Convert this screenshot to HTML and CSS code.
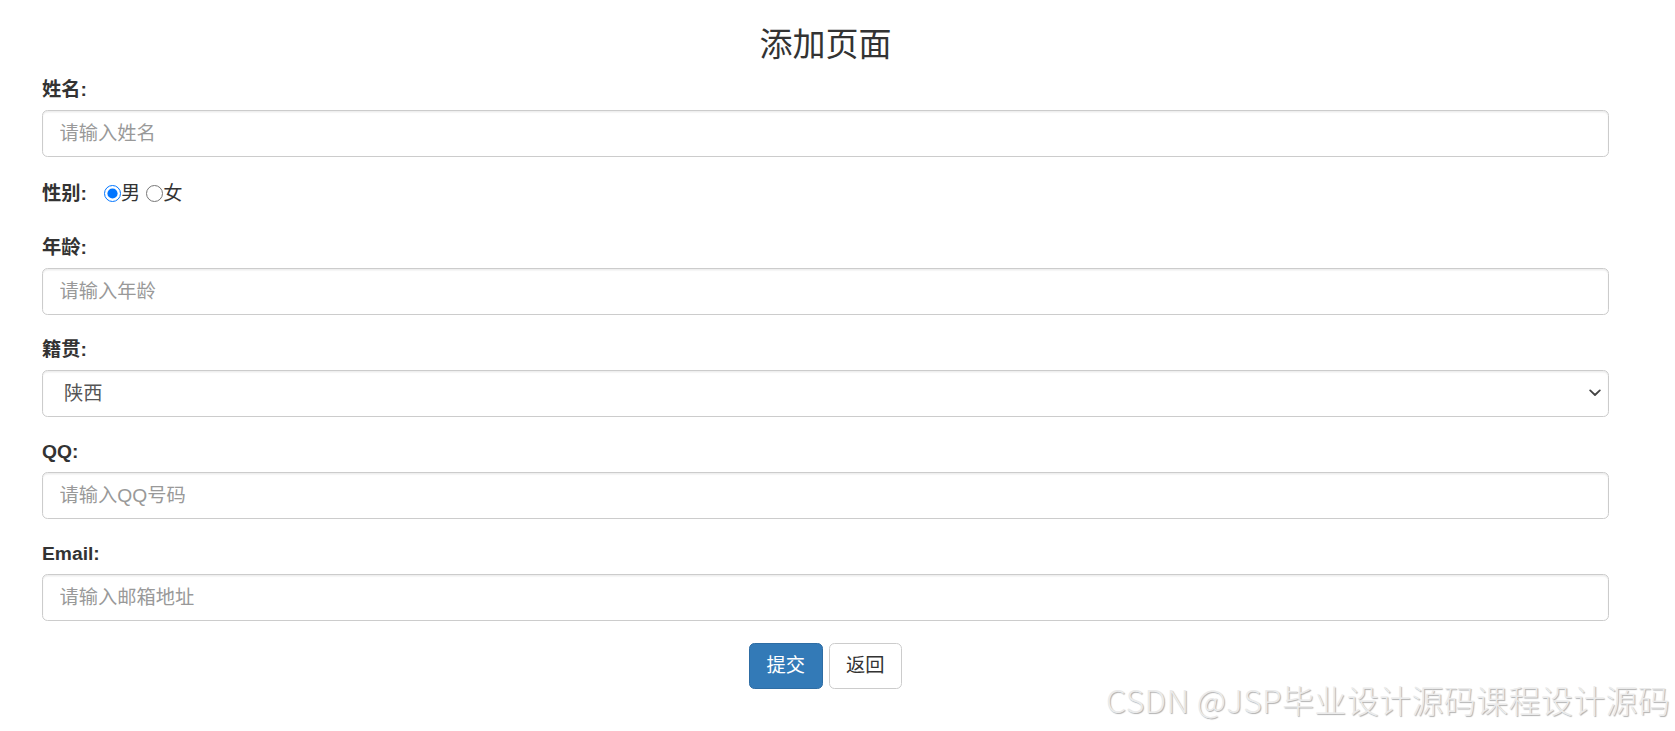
FILE: index.html
```html
<!DOCTYPE html>
<html lang="zh-CN">
<head>
    <meta charset="UTF-8">
    <meta name="viewport" content="width=device-width, initial-scale=1.0">
    <title>添加页面</title>
    <link rel="stylesheet" href="styles.css">
</head>

<body>

    <div class="container">
        <h3 class="title">添加页面</h3>

        <form action="#" method="post">
            <div class="form-group">
                <label for="name">姓名:</label>
                <input type="text" class="form-control" id="name" name="name" placeholder="请输入姓名">
            </div>

            <div class="form-group radio-row">
                <label>性别:</label>
                <input type="radio" name="sex" id="male" value="男" checked><span>男</span>
                <input type="radio" name="sex" id="female" value="女"><span>女</span>
            </div>

            <div class="form-group">
                <label for="age">年龄:</label>
                <input type="text" class="form-control" id="age" name="age" placeholder="请输入年龄">
            </div>

            <div class="form-group">
                <label for="address">籍贯:</label>
                <div class="select-wrap">
                    <select class="form-control" id="address" name="address">
                        <option value="陕西">陕西</option>
                        <option value="北京">北京</option>
                        <option value="上海">上海</option>
                    </select>
                    <svg class="chevron" width="12" height="8" viewBox="0 0 12 8" aria-hidden="true">
                        <path d="M1.2 1.4 L6 6 L10.8 1.4" fill="none" stroke="#444" stroke-width="1.8" stroke-linecap="round" stroke-linejoin="round"/>
                    </svg>
                </div>
            </div>

            <div class="form-group">
                <label for="qq">QQ:</label>
                <input type="text" class="form-control" id="qq" name="qq" placeholder="请输入QQ号码">
            </div>

            <div class="form-group">
                <label for="email">Email:</label>
                <input type="text" class="form-control" id="email" name="email" placeholder="请输入邮箱地址">
            </div>

            <div class="form-group buttons">
                <input class="btn btn-primary" type="submit" value="提交">
                <input class="btn btn-default" type="button" value="返回">
            </div>
        </form>
    </div>

    <!-- filigrane de la capture -->
    <div class="watermark">CSDN @JSP毕业设计源码课程设计源码</div>

</body>
</html>
```

FILE: styles.css
```css
/* Corps de la page */
body {
    margin: 0;
    font-family: "Liberation Sans", "Noto Sans CJK SC", sans-serif;
    font-size: 19.25px;
    line-height: 27.5px;
    color: #333;
    background: #fff;
    position: relative;
    min-height: 731px;
}

.container {
    padding: 0 66px 0 42px;
}

.title {
    margin: 27px 0 12.5px;
    font-size: 33px;
    line-height: 36.3px;
    font-weight: 400;
    text-align: center;
}

.form-group {
    margin-bottom: 20.6px;
}

    .form-group label {
        display: inline-block;
        margin-bottom: 6.9px;
        font-weight: 700;
    }

.form-control {
    display: block;
    box-sizing: border-box;
    width: 100%;
    height: 47px;
    padding: 8.25px 16.5px;
    font-family: inherit;
    font-size: 19.25px;
    line-height: 27.5px;
    color: #555;
    background-color: #fff;
    border: 1px solid #ccc;
    border-radius: 5.5px;
    box-shadow: inset 0 1.4px 1.4px rgba(0, 0, 0, 0.075);
}

    .form-control::placeholder {
        color: #999;
    }

/* Liste déroulante avec chevron dessiné */
.select-wrap {
    position: relative;
}

    .select-wrap select {
        appearance: none;
        -webkit-appearance: none;
        padding-left: 21px;
        padding-right: 36px;
    }

.chevron {
    position: absolute;
    right: 8px;
    top: 19px;
    pointer-events: none;
}

/* Ligne des boutons radio */
.radio-row {
    display: flex;
    align-items: center;
    height: 27.5px;
    padding-top: 2px;
    margin-bottom: 26.5px;
}

    .radio-row label {
        margin-bottom: 0;
    }

    .radio-row input[type="radio"] {
        width: 17px;
        height: 17px;
        margin: 0 0 0 6px;
    }

        .radio-row input[type="radio"]:first-of-type {
            margin-left: 17px;
        }

.buttons {
    display: flex;
    justify-content: center;
    gap: 6px;
    padding-top: 1px;
}

.btn {
    box-sizing: border-box;
    height: 46px;
    padding: 8.25px 16.5px;
    font-family: inherit;
    font-size: 19.25px;
    line-height: 27.5px;
    border: 1px solid transparent;
    border-radius: 5.5px;
    cursor: pointer;
}

.btn-primary {
    color: #fff;
    background-color: #337ab7;
    border-color: #2e6da4;
}

.btn-default {
    color: #333;
    background-color: #fff;
    border-color: #ccc;
}

.watermark {
    position: absolute;
    left: 1106px;
    top: 679px;
    font-family: "Noto Sans CJK SC", sans-serif;
    font-size: 32px;
    font-weight: 300;
    letter-spacing: 0.35px;
    line-height: 40px;
    color: #ebebeb;
    text-shadow: 1px 1px 1px #b0b0b0;
    white-space: nowrap;
}
```
